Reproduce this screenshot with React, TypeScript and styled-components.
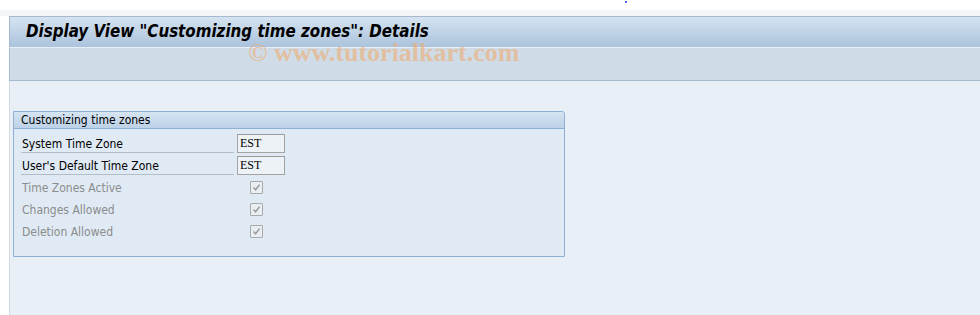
import styled, { createGlobalStyle } from "styled-components";

const Global = createGlobalStyle`
  html, body {
    margin: 0;
    padding: 0;
    background: #ffffff;
  }
  body {
    font-family: "DejaVu Sans Condensed", "DejaVu Sans", sans-serif;
  }
`;

const Page = styled.div`
  display: flex;
  flex-direction: column;
  height: 315px;
  overflow: hidden;
`;

const TopStrip = styled.div`
  height: 10px;
  background: #ffffff;
  display: flex;
  align-items: flex-start;
`;

const Dot = styled.div`
  width: 2px;
  height: 2px;
  margin: 1px 0 0 625px;
  background: #5a6ae8;
`;

const Shade = styled.div`
  height: 6px;
  background: #f4f6f9;
`;

const Window = styled.div`
  position: relative;
  flex: 1;
  margin-left: 9px;
  display: flex;
  flex-direction: column;
  border-left: 1px solid #d2dae3;
`;

const TitleBar = styled.div`
  height: 31px;
  border-top: 1px solid #a6b9ce;
  border-left: 1px solid #a6b9ce;
  margin-left: -1px;
  background: linear-gradient(#d5e3f0, #abc3dc);
  display: flex;
  align-items: center;
  padding: 0 0 2px 16px;
  box-sizing: border-box;
`;

const Title = styled.h1`
  margin: 0;
  font-family: "DejaVu Sans Condensed", "DejaVu Sans", sans-serif;
  font-size: 16.8px;
  font-weight: bold;
  font-style: italic;
  color: #000000;
`;

const Toolbar = styled.div`
  height: 32px;
  border-top: 1px solid #e8eef5;
  border-bottom: 1px solid #a5b8ce;
  border-left: 1px solid #a6b9ce;
  margin-left: -1px;
  background: #cfdce7;
`;

const Watermark = styled.div`
  position: absolute;
  left: 238px;
  top: 22px;
  font-family: "Liberation Serif", serif;
  font-weight: bold;
  font-size: 26px;
  color: rgba(238, 172, 112, 0.62);
  white-space: nowrap;
  pointer-events: none;
`;

const Content = styled.div`
  flex: 1;
  background: #e8eff7;
  padding: 30px 0 0 3px;
`;

const Group = styled.div`
  width: 550px;
  height: 144px;
  border: 1px solid #8eb0d2;
  border-top-right-radius: 3px;
  background: #dfeaf4;
  display: flex;
  flex-direction: column;
`;

const GroupHeader = styled.div`
  height: 16px;
  border-bottom: 1px solid #8eb0d2;
  border-top-right-radius: 3px;
  background: linear-gradient(#d6e4f2, #bcd2e8);
  font-size: 12px;
  line-height: 16px;
  padding-left: 7px;
  color: #000000;
`;

const Rows = styled.div`
  display: flex;
  flex-direction: column;
  gap: 3px;
  padding: 5px 0 0 7px;
`;

const Row = styled.div`
  display: flex;
  align-items: center;
  height: 19px;
`;

const Label = styled.div<{ $disabled?: boolean; $underline?: boolean }>`
  width: ${({ $underline }) => ($underline ? "212px" : "215px")};
  margin-right: ${({ $underline }) => ($underline ? "3px" : "0")};
  height: 18px;
  line-height: 21px;
  font-size: 12px;
  padding-left: 1px;
  color: ${({ $disabled }) => ($disabled ? "#8c8c8c" : "#000000")};
  border-bottom: 1px solid ${({ $underline }) => ($underline ? "#b4bcc6" : "transparent")};
`;

const Field = styled.div`
  width: 44px;
  height: 17px;
  border: 1px solid #a3a3a3;
  border-top-color: #9a9a9a;
  background: #edf2f7;
  font-family: "Liberation Serif", serif;
  font-size: 12px;
  line-height: 17px;
  padding-left: 2px;
  color: #000000;
`;

const Check = styled.div`
  width: 11px;
  height: 11px;
  margin-left: 13px;
  border: 1px solid #a9a9a9;
  border-radius: 1px;
  background: #e9eef3;
  display: flex;
  align-items: center;
  justify-content: center;
`;

const CheckMark = () => (
  <svg width="9" height="9" viewBox="0 0 9 9">
    <path d="M1.5 4.5 L3.6 6.8 L7.6 1.6" fill="none" stroke="#9a9a9a" strokeWidth="1.5" />
  </svg>
);

const fields = [
  { label: "System Time Zone", value: "EST" },
  { label: "User's Default Time Zone", value: "EST" },
];

const flags = ["Time Zones Active", "Changes Allowed", "Deletion Allowed"];

export default function App() {
  return (
    <Page>
      <Global />
      <TopStrip>
        <Dot />
      </TopStrip>
      <Shade />
      <Window>
        <TitleBar>
          <Title>Display View "Customizing time zones": Details</Title>
        </TitleBar>
        <Toolbar />
        <Watermark>© www.tutorialkart.com</Watermark>
        <Content>
          <Group>
            <GroupHeader>Customizing time zones</GroupHeader>
            <Rows>
              {fields.map((f) => (
                <Row key={f.label}>
                  <Label $underline>{f.label}</Label>
                  <Field>{f.value}</Field>
                </Row>
              ))}
              {flags.map((f) => (
                <Row key={f}>
                  <Label $disabled>{f}</Label>
                  <Check>
                    <CheckMark />
                  </Check>
                </Row>
              ))}
            </Rows>
          </Group>
        </Content>
      </Window>
    </Page>
  );
}
